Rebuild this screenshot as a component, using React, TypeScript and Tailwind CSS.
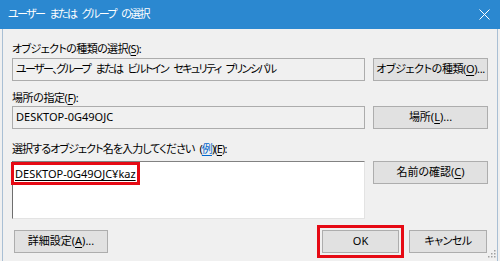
import React from 'react';

const font = "font-['Noto_Sans','Noto_Sans_CJK_JP',sans-serif] [font-feature-settings:'palt']";

function U({ c }: { c: string }) {
  return <span className="underline underline-offset-2">{c}</span>;
}

function Btn({ children, className = '' }: { children: React.ReactNode; className?: string }) {
  return (
    <div className={`h-[23px] bg-[#e1e1e1] border border-[#adadad] text-[11px] text-black flex items-center justify-center ${className}`}>
      <span className="whitespace-nowrap">{children}</span>
    </div>
  );
}

function Box({ text, className = '' }: { text: string; className?: string }) {
  return (
    <div className={`h-[23px] border border-[#acacac] bg-[#f0f0f0] px-[3px] flex items-center text-[11px] text-black whitespace-nowrap overflow-hidden ${className}`}>
      {text}
    </div>
  );
}

export default function App() {
  return (
    <div className={`w-[500px] h-[261px] bg-[#f0f0f0] flex flex-col overflow-hidden relative ${font}`}>
      {/* Title bar */}
      <div className="h-[29px] bg-[#2b88d0] flex items-center pl-[8px] pr-[10px] flex-shrink-0">
        <span className="flex-1 text-white text-[11px] tracking-[-1.6px] [word-spacing:4px]">ユーザー または グループ の選択</span>
        <svg width="11" height="11" viewBox="0 0 11 11" className="text-white">
          <path d="M0.5 0.5L10.5 10.5M10.5 0.5L0.5 10.5" stroke="currentColor" strokeWidth={1} />
        </svg>
      </div>

      <div className="flex-1 mx-[2px] border-x border-[#a9bfd4] pl-[9px] pr-[10px] flex flex-col">
        {/* Object type */}
        <div className="grid grid-cols-[353px_115px] gap-x-[8px] mt-[12px]">
          <div className="col-span-2 h-[15px] leading-[15px] text-[11px] text-black tracking-[-0.6px]">
            オブジェクトの種類の選択(<U c="S" />):
          </div>
          <div className="mt-[2px]">
            <Box className="tracking-[-1.6px] [word-spacing:4px]" text="ユーザー、グループ または ビルトイン セキュリティ プリンシパル" />
          </div>
          <Btn className="mt-[2px] tracking-[-0.4px]">オブジェクトの種類(<U c="O" />)...</Btn>
        </div>

        {/* Location */}
        <div className="grid grid-cols-[353px_115px] gap-x-[8px] mt-[9px]">
          <div className="col-span-2 h-[15px] leading-[15px] text-[11px] text-black tracking-[-0.4px]">
            場所の指定(<U c="F" />):
          </div>
          <div className="mt-[1px]"><Box text="DESKTOP-0G49OJC" /></div>
          <Btn className="mt-[1px]">場所(<U c="L" />)...</Btn>
        </div>

        {/* Object names */}
        <div className="grid grid-cols-[353px_115px] gap-x-[8px] mt-[12px]">
          <div className="col-span-2 h-[15px] leading-[15px] text-[11px] text-black tracking-[-0.9px] [word-spacing:3px]">
            選択するオブジェクト名を入力してください (<span className="text-[#0066cc] underline underline-offset-2">例</span>)(<U c="E" />):
          </div>
          <div className="mt-[5px] h-[58px] bg-white border border-t-[#828282] border-l-[#6e6e6e] border-r-[#e3e3e3] border-b-[#e3e3e3] pl-[2px] pt-[4px] text-[11px] leading-[15px]">
            <span className="text-black underline underline-offset-2 outline outline-[3px] outline-[#e60a14] outline-offset-[1px]">
              DESKTOP-0G49OJC¥kaz
            </span>
          </div>
          <Btn className="mt-[5px] self-start">名前の確認(<U c="C" />)</Btn>
        </div>

        {/* Bottom buttons */}
        <div className="flex items-center mt-[11px]">
          <Btn className="w-[94px] ml-[2px]">詳細設定(<U c="A" />)...</Btn>
          <div className="flex-1" />
          <Btn className="w-[77px] border-[#0078d7] outline outline-[3px] outline-[#e60a14] outline-offset-[2px]">OK</Btn>
          <Btn className="w-[78px] ml-[10px] tracking-[-0.5px]">キャンセル</Btn>
        </div>
      </div>

      {/* size grip */}
      <svg width="8" height="8" viewBox="0 0 8 8" className="absolute right-[4px] bottom-[3px]">
        <rect x="6" y="0" width="1.5" height="1.5" fill="#a0a0a0" />
        <rect x="3" y="3" width="1.5" height="1.5" fill="#a0a0a0" />
        <rect x="6" y="3" width="1.5" height="1.5" fill="#a0a0a0" />
        <rect x="0" y="6" width="1.5" height="1.5" fill="#a0a0a0" />
        <rect x="3" y="6" width="1.5" height="1.5" fill="#a0a0a0" />
        <rect x="6" y="6" width="1.5" height="1.5" fill="#a0a0a0" />
      </svg>
    </div>
  );
}
